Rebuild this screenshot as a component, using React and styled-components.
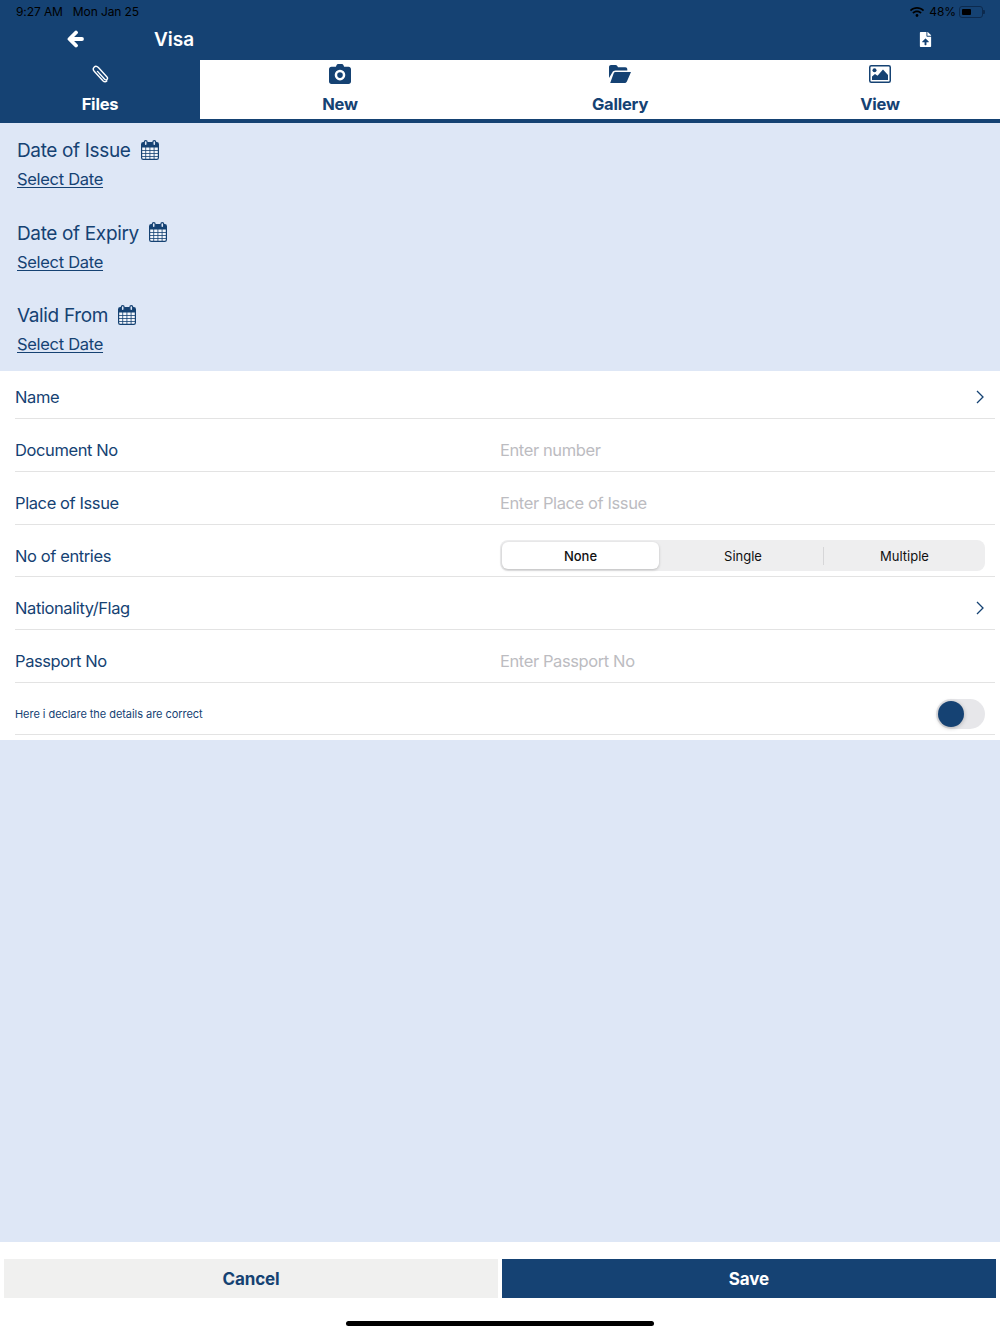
import React from "react";
import styled, { createGlobalStyle } from "styled-components";
import { FaFileUpload, FaWifi } from "react-icons/fa";

const NAVY = "#154273";
const PALE = "#dee7f6";
const FONT = `Inter, "Liberation Sans", Arial, sans-serif`;

const Global = createGlobalStyle`
  html, body { margin: 0; padding: 0; background: #fff; }
  body { font-family: ${FONT}; color: ${NAVY}; }
  * { box-sizing: border-box; }
`;

const Page = styled.div`
  width: 1000px;
  height: 1334px;
  display: flex;
  flex-direction: column;
  overflow: hidden;
  background: #fff;
`;

const Header = styled.header`
  height: 60px;
  background: ${NAVY};
  display: flex;
  flex-direction: column;
`;

const StatusBar = styled.div`
  height: 21px;
  padding: 2px 17px 0 16px;
  display: flex;
  align-items: center;
  justify-content: space-between;
  font-size: 12px;
  letter-spacing: -0.1px;
  color: #000;
`;

const StatusGroup = styled.div`
  display: flex;
  align-items: center;
  gap: ${p => p.$gap}px;
`;

const Battery = styled.span`
  position: relative;
  display: flex;
  align-items: center;
  width: 24px;
  height: 12px;
  padding: 2px;
  margin-left: -2px;
  border: 1px solid #0c2a4e;
  border-radius: 3px;
  &::before {
    content: "";
    display: block;
    width: 9px;
    height: 100%;
    border-radius: 1px;
    background: #000;
  }
  &::after {
    content: "";
    position: absolute;
    right: -3px;
    top: 3px;
    width: 2px;
    height: 4px;
    border-radius: 0 1px 1px 0;
    background: #0c2a4e;
  }
`;

const TitleBar = styled.div`
  height: 36px;
  display: grid;
  grid-template-columns: 154px 1fr 150px;
  align-items: center;
  color: #fff;
`;

const BackCell = styled.div`
  display: flex;
  justify-content: center;
  padding-right: 4px;
`;

const Title = styled.div`
  font-size: 19px;
  font-weight: 600;
`;

const UploadCell = styled.div`
  display: flex;
  justify-content: center;
  font-size: 15px;
`;

const Tabs = styled.nav`
  height: 63px;
  display: grid;
  grid-template-columns: 200px 280px 280px 240px;
  background: #fff;
  border-bottom: 4px solid ${NAVY};
`;

const Tab = styled.div`
  height: 59px;
  display: flex;
  flex-direction: column;
  align-items: center;
  background: ${p => (p.$active ? NAVY : "#fff")};
  color: ${p => (p.$active ? "#fff" : NAVY)};
`;

const TabIcon = styled.div`
  height: 28px;
  display: flex;
  align-items: center;
  justify-content: center;
`;

const TabLabel = styled.div`
  margin-top: 6px;
  font-size: 16.5px;
  line-height: 20px;
  font-weight: 700;
  letter-spacing: -0.2px;
`;

const Dates = styled.section`
  height: 248px;
  background: ${PALE};
  padding: 13px 17px 0;
  display: flex;
  flex-direction: column;
  gap: 23px;
`;

const DateBlock = styled.div`
  height: 59.5px;
  display: flex;
  flex-direction: column;
`;

const DateHead = styled.div`
  display: flex;
  align-items: center;
  gap: 10px;
  height: 27px;
  font-size: 19px;
  letter-spacing: -0.35px;
`;

const DateText = styled.span`
  padding-top: 2px;
`;

const DateLink = styled.a`
  margin-top: 6px;
  font-size: 16.5px;
  line-height: 20px;
  letter-spacing: -0.3px;
  text-decoration: underline;
  text-underline-offset: 2px;
  color: ${NAVY};
`;

const Form = styled.section`
  height: 369px;
  background: #fff;
  padding: 0.6px 5px 0 15px;
`;

const Row = styled.div`
  height: 47.7px;
  margin-bottom: 5px;
  padding-top: 5px;
  display: grid;
  grid-template-columns: 485px 1fr;
  align-items: center;
  border-bottom: 1px solid #e3e3e3;
`;

const Label = styled.div`
  font-size: 16.5px;
  letter-spacing: -0.4px;
  color: ${NAVY};
`;

const SmallLabel = styled.div`
  font-size: 11px;
  letter-spacing: -0.05px;
  color: ${NAVY};
`;

const Placeholder = styled.div`
  font-size: 16.5px;
  letter-spacing: -0.4px;
  color: #bcbcc1;
`;

const Chevron = styled.div`
  display: flex;
  justify-content: flex-end;
  padding-right: 11px;
`;

const Segments = styled.div`
  width: 485px;
  height: 31px;
  background: #eeeeef;
  border-radius: 8px;
  padding: 2px;
  display: grid;
  grid-template-columns: 157px 164px 1fr;
  align-items: center;
`;

const Segment = styled.div`
  height: 27px;
  padding-left: ${p => p.$shift || 0}px;
  display: flex;
  align-items: center;
  justify-content: center;
  font-size: 13px;
  color: #111;
  font-weight: ${p => (p.$on ? 500 : 400)};
  border-radius: 6px;
  background: ${p => (p.$on ? "#fff" : "transparent")};
  box-shadow: ${p => (p.$on ? "0 1px 3px rgba(0,0,0,.22)" : "none")};
  border-left: ${p => (p.$divider ? "1px solid #d6d6d8" : "0")};
  ${p => p.$divider && "border-radius: 0; height: 18px;"}
`;

const ToggleCell = styled.div`
  display: flex;
  justify-content: flex-end;
  padding-right: 10px;
`;

const Toggle = styled.div`
  position: relative;
  width: 49px;
  height: 30px;
  border-radius: 15px;
  background: #e7e7ea;
  &::after {
    content: "";
    position: absolute;
    left: 2px;
    top: 2px;
    width: 26px;
    height: 26px;
    border-radius: 50%;
    background: ${NAVY};
    box-shadow: 0 1px 4px rgba(0, 0, 0, 0.25);
  }
`;

const Filler = styled.div`
  flex: 1;
  background: ${PALE};
`;

const Footer = styled.footer`
  height: 92px;
  background: #fff;
  display: flex;
  flex-direction: column;
  align-items: center;
  padding-top: 17px;
`;

const Buttons = styled.div`
  width: 100%;
  padding: 0 4px;
  display: grid;
  grid-template-columns: 1fr 1fr;
  gap: 4px;
`;

const Button = styled.button`
  height: 39px;
  border: 0;
  padding: 0;
  font-family: ${FONT};
  font-size: 17px;
  font-weight: 700;
  letter-spacing: -0.1px;
  background: ${p => (p.$primary ? NAVY : "#f0f0ef")};
  color: ${p => (p.$primary ? "#fff" : NAVY)};
`;

const HomeBar = styled.div`
  width: 308px;
  height: 5px;
  margin-top: 23px;
  border-radius: 3px;
  background: #000;
`;

const Calendar = () => (
  <svg width="18" height="20" viewBox="0 0 18 20" fill="none">
    <rect x="0.6" y="2.6" width="16.8" height="16.8" rx="1.6" fill="#f4f7fc" stroke={NAVY} strokeWidth="1.2" />
    <path d="M1 3h16v4.500H1z" fill={NAVY} />
    <path d="M1 10.500h16M1 13.500h16M1 16.500h16M4.700 7v12M8.900 7v12M13.100 7v12" stroke={NAVY} strokeWidth="1" opacity="0.8" />
    <rect x="3.300" y="0.600" width="2.800" height="5" rx="1.400" fill={PALE} stroke={NAVY} strokeWidth="1.200" />
    <rect x="11.900" y="0.600" width="2.800" height="5" rx="1.400" fill={PALE} stroke={NAVY} strokeWidth="1.200" />
  </svg>
);

const BackArrow = () => (
  <svg width="17" height="18" viewBox="0 0 17 18" fill="none" stroke="#fff" strokeWidth="3.800" strokeLinecap="round" strokeLinejoin="round">
    <path d="M9 2.500 2.500 9 9 15.500M3 9h12" />
  </svg>
);

const Clip = () => (
  <svg width="17" height="18" viewBox="0 0 17 18" fill="none" stroke="#fff" strokeWidth="1.400" strokeLinecap="round">
    <path d="M14.800 16c-1.200 1.100-2.700.9-3.900-.3L2.400 6.500C1 5 1 3.300 2.100 2.200 3.300 1 5 1.200 6.400 2.600l8.400 9.100c.9 1 .9 2 .2 2.700-.7.700-1.700.6-2.600-.4L5.500 6.400" />
  </svg>
);

const Camera = () => (
  <svg width="22" height="20" viewBox="0 0 22 20">
    <path fill={NAVY} fillRule="evenodd" d="M7.500 1.200C7.800.4 8.400 0 9.200 0h3.600c.8 0 1.400.4 1.700 1.200l.6 1.600h4.400C21 2.800 22 3.800 22 5.200v12.300c0 1.400-1 2.500-2.500 2.500h-17C1 20 0 18.900 0 17.500V5.200c0-1.400 1-2.400 2.500-2.400h4.400zM11 5.800a5.300 5.300 0 1 0 0 10.600 5.300 5.300 0 0 0 0-10.600zm0 2.500a2.800 2.800 0 1 1 0 5.600 2.800 2.800 0 0 1 0-5.600z" />
  </svg>
);

const Folder = () => (
  <svg width="22" height="18" viewBox="0 0 22 18">
    <path fill={NAVY} d="M0 2C0 .9.900 0 2 0h4.500c.8 0 1.400.4 1.800 1l.7 1.200h7.300c1.200 0 2 .8 2 2v1.300H6.500c-1.400 0-2.500.7-3.200 1.900L0 13z" />
    <path fill={NAVY} d="M6.400 7H22l-4 9.200c-.4 1.100-1.300 1.800-2.500 1.800H1.200l3.500-9.800C5 7.400 5.600 7 6.400 7z" />
  </svg>
);

const Picture = () => (
  <svg width="22" height="18" viewBox="0 0 22 18">
    <rect x="0.750" y="0.750" width="20.500" height="16.500" rx="1.500" fill="none" stroke={NAVY} strokeWidth="1.500" />
    <circle cx="5.500" cy="5.300" r="2" fill={NAVY} />
    <path fill={NAVY} d="M3 15v-3.500l3-2.500 2.500 1.800L14 4.500l5 5.500v5z" />
  </svg>
);

const Chev = () => (
  <svg width="8" height="14" viewBox="0 0 8 14" fill="none" stroke={NAVY} strokeWidth="1.300">
    <path d="M1 1l6 6-6 6" />
  </svg>
);

const dates = ["Date of Issue", "Date of Expiry", "Valid From"];
const tabs = [
  ["Files", <Clip />, true],
  ["New", <Camera />],
  ["Gallery", <Folder />],
  ["View", <Picture />],
];

export default function App() {
  return (
    <Page>
      <Global />
      <Header>
        <StatusBar>
          <StatusGroup $gap={10}>
            <span>9:27 AM</span>
            <span>Mon Jan 25</span>
          </StatusGroup>
          <StatusGroup $gap={5}>
            <FaWifi size={14} color="#000" />
            <span>48%</span>
            <Battery />
          </StatusGroup>
        </StatusBar>
        <TitleBar>
          <BackCell><BackArrow /></BackCell>
          <Title>Visa</Title>
          <UploadCell><FaFileUpload /></UploadCell>
        </TitleBar>
      </Header>
      <Tabs>
        {tabs.map(([label, icon, active]) => (
          <Tab key={label} $active={active}>
            <TabIcon>{icon}</TabIcon>
            <TabLabel>{label}</TabLabel>
          </Tab>
        ))}
      </Tabs>
      <Dates>
        {dates.map(d => (
          <DateBlock key={d}>
            <DateHead><DateText>{d}</DateText><Calendar /></DateHead>
            <DateLink>Select Date</DateLink>
          </DateBlock>
        ))}
      </Dates>
      <Form>
        <Row><Label>Name</Label><Chevron><Chev /></Chevron></Row>
        <Row><Label>Document No</Label><Placeholder>Enter number</Placeholder></Row>
        <Row><Label>Place of Issue</Label><Placeholder>Enter Place of Issue</Placeholder></Row>
        <Row>
          <Label>No of entries</Label>
          <Segments>
            <Segment $on>None</Segment>
            <Segment $shift={4}>Single</Segment>
            <Segment $divider $shift={2}>Multiple</Segment>
          </Segments>
        </Row>
        <Row><Label>Nationality/Flag</Label><Chevron><Chev /></Chevron></Row>
        <Row><Label>Passport No</Label><Placeholder>Enter Passport No</Placeholder></Row>
        <Row>
          <SmallLabel>Here i declare the details are correct</SmallLabel>
          <ToggleCell><Toggle /></ToggleCell>
        </Row>
      </Form>
      <Filler />
      <Footer>
        <Buttons>
          <Button>Cancel</Button>
          <Button $primary>Save</Button>
        </Buttons>
        <HomeBar />
      </Footer>
    </Page>
  );
}
